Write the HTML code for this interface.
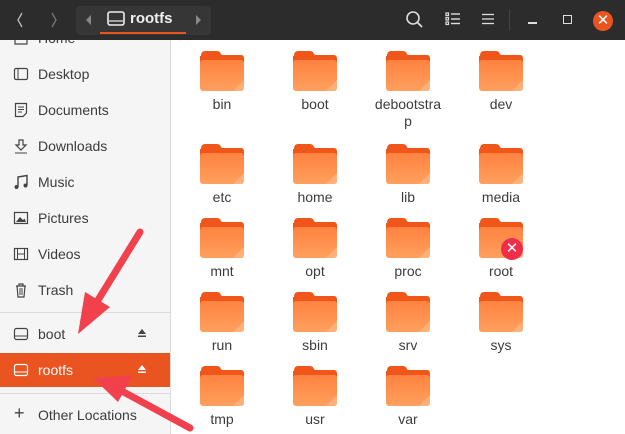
<!DOCTYPE html><html><head><style>
body{margin:0;width:625px;height:434px;overflow:hidden;position:relative;font-family:"Liberation Sans",sans-serif;background:#fff}
.hdr{position:absolute;left:0;top:0;width:625px;height:40px;background:#2c2c2c}
.side{position:absolute;left:0;top:40px;width:170px;height:394px;background:#f5f5f6;border-right:1px solid #dcdcdc}
.it{position:absolute;left:38px;font-size:14px;color:#3c3c3c;line-height:16px}
.ic{position:absolute;left:13px}
.lbl{position:absolute;width:90px;text-align:center;font-size:14px;color:#3c3c3c;line-height:17px}
.f{position:absolute;width:46px;height:42px}
</style></head><body>
<svg width="0" height="0" style="position:absolute"><defs>
<linearGradient id="g" x1="0" y1="0" x2="0" y2="1"><stop offset="0" stop-color="#ff8240"/><stop offset="1" stop-color="#ffa05e"/></linearGradient>
<symbol id="fold" viewBox="0 0 46 42"><path d="M2 6 Q2 1 6 1 H18 Q21 1 22 4 L23 5 H42 Q45 5 45 9 V14 H1 V6Z" fill="#f0561a"/><rect x="1" y="10" width="44" height="31" rx="3" fill="url(#g)"/><path d="M45 30 V38 Q45 41 42 41 H34Z" fill="#ffb988" opacity=".7"/></symbol>
</defs></svg>
<div class="side"></div>
<svg class="ic" style="top:30px" width="16" height="16"><path d="M2 7L8 2L14 7V14H2Z" fill="none" stroke="#444" stroke-width="1.2"/></svg>
<div class="it" style="top:30px">Home</div>
<div class="hdr"></div>
<div style="position:absolute;left:76px;top:6px;width:135px;height:29px;background:#363636;border-radius:4px"></div>
<div style="position:absolute;left:86px;top:15px;width:0;height:0;border:5px solid transparent;border-right:5px solid #888;border-left:0"></div>
<div style="position:absolute;left:196px;top:15px;width:0;height:0;border:5px solid transparent;border-left:5px solid #888;border-right:0"></div>
<svg style="position:absolute;left:107px;top:11px" width="18" height="16"><rect x="1" y="1" width="16" height="13" rx="2" fill="none" stroke="#eee" stroke-width="1.6"/><line x1="2" y1="10" x2="16" y2="10" stroke="#eee" stroke-width="1.2"/></svg>
<div style="position:absolute;left:130px;top:10px;color:#f0f0f0;font-size:15px;font-weight:bold">rootfs</div>
<div style="position:absolute;left:100px;top:32px;width:86px;height:2px;background:#e95420"></div>
<svg style="position:absolute;left:14px;top:11px" width="12" height="18"><path d="M8 2L4 9L8 16" fill="none" stroke="#bbb" stroke-width="1.3"/></svg>
<svg style="position:absolute;left:48px;top:11px" width="12" height="18"><path d="M4 2L8 9L4 16" fill="none" stroke="#777" stroke-width="1.3"/></svg>
<svg style="position:absolute;left:405px;top:10px" width="20" height="20"><circle cx="8" cy="8" r="6" fill="none" stroke="#ddd" stroke-width="1.6"/><line x1="12.5" y1="12.5" x2="17" y2="17" stroke="#ddd" stroke-width="1.8"/></svg>
<svg style="position:absolute;left:445px;top:12px" width="16" height="14"><g fill="none" stroke="#ddd" stroke-width="1.2"><rect x="1" y="1" width="2.5" height="2.5"/><rect x="1" y="5.5" width="2.5" height="2.5"/><rect x="1" y="10" width="2.5" height="2.5"/></g><g stroke="#ddd" stroke-width="1.4"><line x1="6" y1="2" x2="15" y2="2"/><line x1="6" y1="7" x2="15" y2="7"/><line x1="6" y1="11.5" x2="15" y2="11.5"/></g></svg>
<svg style="position:absolute;left:482px;top:13px" width="12" height="12"><g stroke="#ddd" stroke-width="1.3"><line x1="0" y1="1.5" x2="12" y2="1.5"/><line x1="0" y1="6" x2="12" y2="6"/><line x1="0" y1="10.5" x2="12" y2="10.5"/></g></svg>
<div style="position:absolute;left:509px;top:9px;width:1px;height:22px;background:#444"></div>
<div style="position:absolute;left:528px;top:22px;width:9px;height:1.5px;background:#ddd"></div>
<div style="position:absolute;left:563px;top:15px;width:7px;height:7px;border:1.4px solid #ddd"></div>
<div style="position:absolute;left:593px;top:11px;width:20px;height:20px;border-radius:50%;background:#e95420;color:#fff;font-size:15px;text-align:center;line-height:20px">&#x2715;</div>

<svg class="ic" style="top:66px" width="16" height="16"><rect x="1.5" y="2.5" width="13" height="11" rx="1.5" fill="none" stroke="#444" stroke-width="1.2"/><line x1="5" y1="3" x2="5" y2="13" stroke="#444"/></svg>
<div class="it" style="top:66px">Desktop</div>
<svg class="ic" style="top:102px" width="16" height="16"><path d="M2.5 1.5H13.5V11L10 14.5H2.5Z" fill="none" stroke="#444" stroke-width="1.2"/><g stroke="#444"><line x1="5" y1="5" x2="11" y2="5"/><line x1="5" y1="7.5" x2="11" y2="7.5"/><line x1="5" y1="10" x2="9" y2="10"/></g></svg>
<div class="it" style="top:102px">Documents</div>
<svg class="ic" style="top:138px" width="16" height="16"><path d="M6 2H10V7H13L8 12L3 7H6Z" fill="none" stroke="#444" stroke-width="1.2"/><line x1="2" y1="15" x2="14" y2="15" stroke="#444"/></svg>
<div class="it" style="top:138px">Downloads</div>
<svg class="ic" style="top:174px" width="16" height="16"><path d="M5 13V3L14 1.5V11" fill="none" stroke="#444" stroke-width="1.4"/><circle cx="3.5" cy="13" r="2" fill="#444"/><circle cx="12.5" cy="11.5" r="2" fill="#444"/></svg>
<div class="it" style="top:174px">Music</div>
<svg class="ic" style="top:210px" width="16" height="16"><rect x="1.5" y="2.5" width="13" height="11" fill="none" stroke="#444" stroke-width="1.2"/><path d="M3 12L7 7L10 10L11.5 8.5L13 12Z" fill="#444"/></svg>
<div class="it" style="top:210px">Pictures</div>
<svg class="ic" style="top:246px" width="16" height="16"><rect x="1.5" y="2.5" width="13" height="11" fill="none" stroke="#444" stroke-width="1.2"/><line x1="4.5" y1="3" x2="4.5" y2="13" stroke="#444"/><line x1="11.5" y1="3" x2="11.5" y2="13" stroke="#444"/><line x1="5" y1="8" x2="11" y2="8" stroke="#444"/></svg>
<div class="it" style="top:246px">Videos</div>
<svg class="ic" style="top:282px" width="16" height="16"><path d="M3 4H13M6 4V2H10V4M4 4L5 15H11L12 4" fill="none" stroke="#444" stroke-width="1.2"/><g stroke="#444"><line x1="7" y1="6" x2="7" y2="13"/><line x1="9" y1="6" x2="9" y2="13"/></g></svg>
<div class="it" style="top:282px">Trash</div>
<div style="position:absolute;left:0;top:312px;width:170px;height:1px;background:#dcdcdc"></div>
<svg class="ic" style="top:326px" width="16" height="16"><rect x="1.5" y="2.5" width="13" height="11" rx="2" fill="none" stroke="#444" stroke-width="1.2"/><line x1="2" y1="10" x2="14" y2="10" stroke="#444"/></svg>
<div class="it" style="top:326px">boot</div>
<svg style="position:absolute;left:137px;top:328px" width="10" height="10"><path d="M1 6L5 1L9 6Z" fill="#444"/><rect x="1" y="7.5" width="8" height="1.5" fill="#444"/></svg>
<div style="position:absolute;left:0;top:353px;width:170px;height:34px;background:#e95420"></div>
<svg class="ic" style="top:362px" width="16" height="16"><rect x="1.5" y="2.5" width="13" height="11" rx="2" fill="none" stroke="#fff" stroke-width="1.2"/><line x1="2" y1="10" x2="14" y2="10" stroke="#fff"/></svg>
<div class="it" style="top:362px;color:#fff">rootfs</div>
<svg style="position:absolute;left:137px;top:364px" width="10" height="10"><path d="M1 6L5 1L9 6Z" fill="#fff"/><rect x="1" y="7.5" width="8" height="1.5" fill="#fff"/></svg>
<div style="position:absolute;left:0;top:393px;width:170px;height:1px;background:#dcdcdc"></div>
<div style="position:absolute;left:14px;top:403px;font-size:18px;color:#444">+</div>
<div class="it" style="top:407px">Other Locations</div>

<svg class="f" style="left:199px;top:50px"><use href="#fold"/></svg>
<svg class="f" style="left:292px;top:50px"><use href="#fold"/></svg>
<svg class="f" style="left:385px;top:50px"><use href="#fold"/></svg>
<svg class="f" style="left:478px;top:50px"><use href="#fold"/></svg>
<div class="lbl" style="left:177px;top:96px">bin</div>
<div class="lbl" style="left:270px;top:96px">boot</div>
<div class="lbl" style="left:363px;top:96px">debootstra<br>p</div>
<div class="lbl" style="left:456px;top:96px">dev</div>
<svg class="f" style="left:199px;top:143px"><use href="#fold"/></svg>
<svg class="f" style="left:292px;top:143px"><use href="#fold"/></svg>
<svg class="f" style="left:385px;top:143px"><use href="#fold"/></svg>
<svg class="f" style="left:478px;top:143px"><use href="#fold"/></svg>
<div class="lbl" style="left:177px;top:189px">etc</div>
<div class="lbl" style="left:270px;top:189px">home</div>
<div class="lbl" style="left:363px;top:189px">lib</div>
<div class="lbl" style="left:456px;top:189px">media</div>
<svg class="f" style="left:199px;top:217px"><use href="#fold"/></svg>
<svg class="f" style="left:292px;top:217px"><use href="#fold"/></svg>
<svg class="f" style="left:385px;top:217px"><use href="#fold"/></svg>
<svg class="f" style="left:478px;top:217px"><use href="#fold"/></svg>
<div style="position:absolute;left:501px;top:238px;width:22px;height:22px;border-radius:50%;background:#ef2d4a;color:#fff;font-size:15px;text-align:center;line-height:22px">&#x2715;</div>
<div class="lbl" style="left:177px;top:263px">mnt</div>
<div class="lbl" style="left:270px;top:263px">opt</div>
<div class="lbl" style="left:363px;top:263px">proc</div>
<div class="lbl" style="left:456px;top:263px">root</div>
<svg class="f" style="left:199px;top:291px"><use href="#fold"/></svg>
<svg class="f" style="left:292px;top:291px"><use href="#fold"/></svg>
<svg class="f" style="left:385px;top:291px"><use href="#fold"/></svg>
<svg class="f" style="left:478px;top:291px"><use href="#fold"/></svg>
<div class="lbl" style="left:177px;top:337px">run</div>
<div class="lbl" style="left:270px;top:337px">sbin</div>
<div class="lbl" style="left:363px;top:337px">srv</div>
<div class="lbl" style="left:456px;top:337px">sys</div>
<svg class="f" style="left:199px;top:365px"><use href="#fold"/></svg>
<svg class="f" style="left:292px;top:365px"><use href="#fold"/></svg>
<svg class="f" style="left:385px;top:365px"><use href="#fold"/></svg>
<div class="lbl" style="left:177px;top:411px">tmp</div>
<div class="lbl" style="left:270px;top:411px">usr</div>
<div class="lbl" style="left:363px;top:411px">var</div>

<svg style="position:absolute;left:0;top:0" width="625" height="434">
<g stroke="#f0414d" stroke-width="7" stroke-linecap="round" fill="#f0414d">
<line x1="140" y1="232" x2="95" y2="305"/>
<line x1="190" y1="428" x2="120" y2="390"/>
</g>
<path d="M78 334 L85 292 L110 307 Z" fill="#f0414d"/>
<path d="M93 378 L133 375 L118 402 Z" fill="#f0414d"/>
</svg>
</body></html>
